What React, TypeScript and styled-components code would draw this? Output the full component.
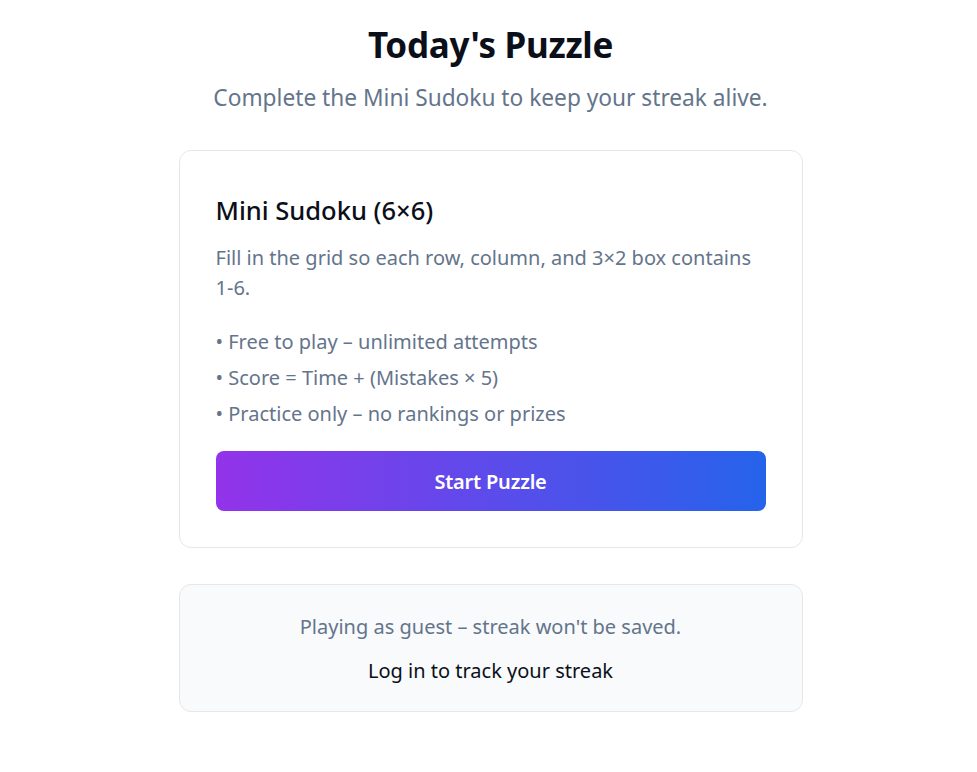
import React from "react";
import styled, {createGlobalStyle} from "styled-components";

const GlobalStyle = createGlobalStyle`
  * {
    box-sizing: border-box;
  }
  body {
    margin: 0;
    background: #ffffff;
    font-family: "Noto Sans", "Open Sans", sans-serif;
    color: #0f172a;
  }
`;

const Page = styled.main`
  display: flex;
  flex-direction: column;
  align-items: center;
  padding: 22px 0 40px 4px;
`;

const Title = styled.h1`
  margin: 0;
  font-size: 35px;
  line-height: 1.3;
  font-weight: 700;
  color: #0b0f19;
  letter-spacing: -0.3px;
`;

const Subtitle = styled.p`
  margin: 13px 0 0;
  font-size: 22.7px;
  line-height: 34px;
  color: #64748b;
`;

const Card = styled.section<{$muted?: boolean}>`
  width: 624px;
  margin-top: ${p => (p.$muted ? "36px" : "35px")};
  padding: ${p => (p.$muted ? "27px 24px 25px" : "42px 36px 36px")};
  border: 1px solid #e5e7eb;
  border-radius: 12px;
  background: ${p => (p.$muted ? "#f8fafc" : "#ffffff")};
  display: flex;
  flex-direction: column;
  align-items: ${p => (p.$muted ? "center" : "stretch")};
  gap: ${p => (p.$muted ? "14px" : "0")};
`;

const CardTitle = styled.h2`
  margin: 0;
  font-size: 25.5px;
  line-height: 1.4;
  font-weight: 500;
  color: #0b0f19;
`;

const Description = styled.p`
  margin: 15px 0 0;
  font-size: 20px;
  line-height: 30px;
  color: #64748b;
`;

const Bullets = styled.ul`
  list-style: none;
  margin: 24px 0 0;
  padding: 0;
  display: flex;
  flex-direction: column;
  gap: 6px;
`;

const Bullet = styled.li`
  font-size: 20px;
  line-height: 30px;
  color: #64748b;
`;

const StartButton = styled.button`
  margin-top: 22px;
  height: 60px;
  width: 100%;
  border: 0;
  border-radius: 8px;
  background: linear-gradient(to right, #9333ea, #2563eb);
  color: #ffffff;
  font-family: inherit;
  font-size: 20px;
  font-weight: 600;
  letter-spacing: -0.2px;
  cursor: pointer;
`;

const Note = styled.p<{$strong?: boolean}>`
  margin: 0;
  font-size: 20px;
  line-height: 30px;
  color: ${p => (p.$strong ? "#0b0f19" : "#64748b")};
`;

const LoginLink = styled.a`
  color: #0b0f19;
  text-decoration: none;
  cursor: pointer;
`;

const bullets = [
  "• Free to play – unlimited attempts",
  "• Score = Time + (Mistakes × 5)",
  "• Practice only – no rankings or prizes",
];

function App() {
  return (
    <>
      <GlobalStyle />
      <Page>
        <Title>Today's Puzzle</Title>
        <Subtitle>Complete the Mini Sudoku to keep your streak alive.</Subtitle>
        <Card>
          <CardTitle>Mini Sudoku (6×6)</CardTitle>
          <Description>
            Fill in the grid so each row, column, and 3×2 box contains 1-6.
          </Description>
          <Bullets>
            {bullets.map(b => (
              <Bullet key={b}>{b}</Bullet>
            ))}
          </Bullets>
          <StartButton>Start Puzzle</StartButton>
        </Card>
        <Card $muted>
          <Note>Playing as guest – streak won't be saved.</Note>
          <Note $strong>
            <LoginLink>Log in to track your streak</LoginLink>
          </Note>
        </Card>
      </Page>
    </>
  );
}

export default App;
